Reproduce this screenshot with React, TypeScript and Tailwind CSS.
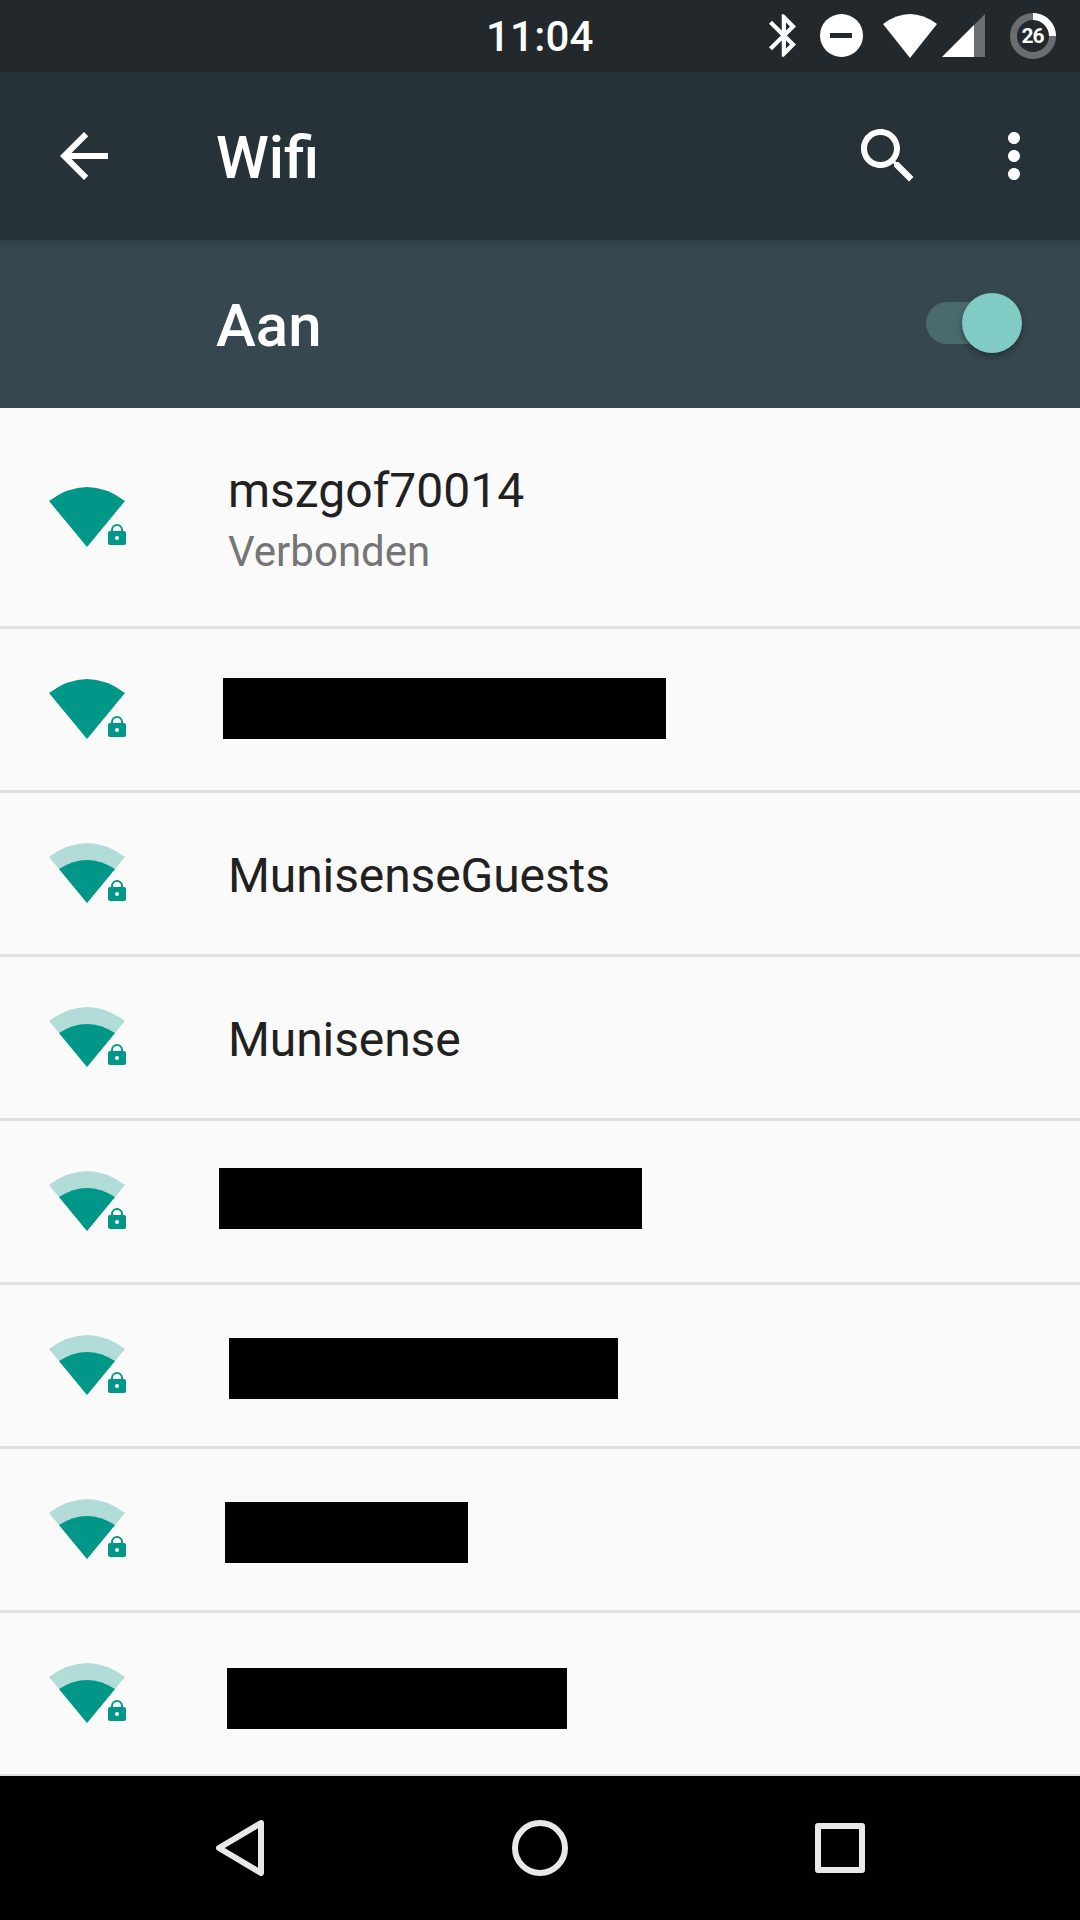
import React from "react";

const rowFont = { fontFamily: "Roboto, sans-serif" };

const WifiIcon = ({ full }: { full?: boolean }) => {
  return (
    <svg width="84" height="66" viewBox="0 0 84 66" className="shrink-0 mt-[5px]">
      {full ? (
        <path d="M0 14 Q38 -14 76 14 L38 60 Z" fill="#009688" />
      ) : (
        <>
          <path d="M0 14 Q38 -14 76 14 L38 60 Z" fill="#b2dcd7" />
          <path d="M10 26 Q38 8 66 26 L38 60 Z" fill="#009688" />
        </>
      )}
      {/* lock */}
      <path d="M63 44v-1a5 5 0 0 1 10 0v1" fill="none" stroke="#009688" strokeWidth="2" />
      <path d="M61 58a2 2 0 0 1-2-2V46a2 2 0 0 1 2-2h14a2 2 0 0 1 2 2v10a2 2 0 0 1-2 2Z" fill="#009688" />
      <circle cx="68" cy="51" r="2" fill="#fafafa" />
    </svg>
  );
};

const Row = ({ children }: { children: React.ReactNode }) => (
  <div className="flex items-center h-[164px] shrink-0 border-b-[3px] border-[#e0e0e0] pl-[49px]">
    {children}
  </div>
);

export default function App() {
  return (
    <div className="w-[1080px] h-[1920px] flex flex-col overflow-hidden bg-[#fafafa]" style={rowFont}>
      {/* status bar */}
      <div className="relative flex items-center h-[72px] shrink-0 bg-[#22282c] text-white">
        <span className="ml-[486px] mt-[2px] text-[42px] leading-[72px] font-medium tracking-[0.2px]">11:04</span>
        <svg width="27" height="43" viewBox="5 2 12.710 20" fill="#fff" className="ml-[175px] shrink-0 -mt-[1px]">
          <path d="M17.710 7.710L12 2h-1v7.590L6.410 5 5 6.410 10.590 12 5 17.590 6.410 19 11 14.410V22h1l5.710-5.710-4.300-4.290 4.300-4.290zM13 5.830l1.880 1.880L13 9.590V5.830zm1.880 10.460L13 18.170v-3.760l1.880 1.880z" />
        </svg>
        <div className="ml-[24px] w-[43px] h-[43px] rounded-full bg-white flex items-center justify-center shrink-0 -mt-[1px]">
          <div className="w-[22px] h-[5px] bg-[#22282c]" />
        </div>
        <svg width="54" height="44" viewBox="0 0 54 44" className="ml-[20px] shrink-0 -mt-[1px]">
          <path d="M0 10 Q27 -10 54 10 L27 44 Z" fill="#fff" />
        </svg>
        <svg width="43" height="43" viewBox="0 0 43 43" className="ml-[5px] shrink-0 -mt-[1px]">
          <path d="M0 43 L43 0 V43 Z" fill="#6a6e71" />
          <path d="M0 43 L32 11 V43 Z" fill="#fff" />
        </svg>
        <div className="relative ml-[25px] w-[46px] h-[46px] shrink-0">
          <svg width="46" height="46" viewBox="0 0 46 46">
            <circle cx="23" cy="23" r="19.500" fill="none" stroke="#6a6e71" strokeWidth="7" />
            <path d="M23 3.500 A19.500 19.500 0 0 1 42.500 23" fill="none" stroke="#fff" strokeWidth="7" />
          </svg>
          <span className="absolute inset-0 flex items-center justify-center text-[21px] font-bold leading-none tracking-[-1px] text-white">
            26
          </span>
        </div>
      </div>

      {/* app bar */}
      <div className="relative z-10 flex items-center h-[168px] shrink-0 bg-[#263238] text-white shadow-[0_3px_10px_rgba(0,0,0,0.12)]">
        <svg width="72" height="72" viewBox="0 0 24 24" fill="#fff" className="ml-[48px] shrink-0">
          <path d="M20 11H7.830l5.590-5.590L12 4l-8 8 8 8 1.410-1.410L7.830 13H20v-2z" />
        </svg>
        <span className="ml-[96px] mt-[3px] text-[60px] font-medium leading-none">Wifi</span>
        <svg width="72" height="72" viewBox="0 0 24 24" fill="#fff" className="ml-auto shrink-0">
          <path d="M15.500 14h-.79l-.28-.27C15.410 12.590 16 11.110 16 9.500 16 5.910 13.090 3 9.500 3S3 5.910 3 9.500 5.910 16 9.500 16c1.610 0 3.090-.59 4.230-1.570l.27.28v.79l5 4.990L20.490 19l-4.990-5zm-6 0C7.010 14 5 11.990 5 9.500S7.010 5 9.500 5 14 7.010 14 9.500 11.990 14 9.500 14z" />
        </svg>
        <svg width="72" height="72" viewBox="0 0 24 24" fill="#fff" className="ml-[54px] mr-[30px] shrink-0">
          <path d="M12 8c1.100 0 2-.9 2-2s-.9-2-2-2-2 .9-2 2 .9 2 2 2zm0 2c-1.100 0-2 .9-2 2s.9 2 2 2 2-.9 2-2-.9-2-2-2zm0 6c-1.100 0-2 .9-2 2s.9 2 2 2 2-.9 2-2-.9-2-2-2z" />
        </svg>
      </div>

      {/* on/off bar */}
      <div className="flex items-center h-[168px] shrink-0 bg-[#37474f] text-white">
        <span className="ml-[216px] mt-[3px] text-[60px] font-medium leading-none">Aan</span>
        <div className="relative ml-auto mr-[64px] w-[90px] h-[42px] rounded-full bg-[#4b6a6c] -mt-[2px]">
          <div className="absolute left-[36px] -top-[9px] w-[60px] h-[60px] rounded-full bg-[#80cbc4] shadow-[0_3px_6px_rgba(0,0,0,0.35)]" />
        </div>
      </div>

      {/* network list */}
      <div className="flex-1 flex flex-col overflow-hidden">
        <div className="flex items-center h-[221px] shrink-0 border-b-[3px] border-[#e0e0e0] pl-[49px]">
          <WifiIcon full />
          <div className="ml-[95px] mt-[8px] flex flex-col">
            <span className="text-[48px] leading-[60px] text-[#212121]">mszgof70014</span>
            <span className="text-[42px] leading-[61px] text-[#757575]">Verbonden</span>
          </div>
        </div>
        <Row>
          <WifiIcon full />
          <div className="ml-[90px] w-[443px] h-[61px] bg-black -mt-[2px]" />
        </Row>
        <Row>
          <WifiIcon />
          <span className="ml-[95px] mt-[5px] text-[48px] leading-[60px] tracking-[-0.1px] text-[#212121]">MunisenseGuests</span>
        </Row>
        <Row>
          <WifiIcon />
          <span className="ml-[95px] mt-[5px] text-[48px] leading-[60px] tracking-[-0.1px] text-[#212121]">Munisense</span>
        </Row>
        <Row>
          <WifiIcon />
          <div className="ml-[86px] w-[423px] h-[61px] bg-black -mt-[6px]" />
        </Row>
        <Row>
          <WifiIcon />
          <div className="ml-[96px] w-[389px] h-[61px] bg-black mt-[6px]" />
        </Row>
        <Row>
          <WifiIcon />
          <div className="ml-[92px] w-[243px] h-[61px] bg-black mt-[6px]" />
        </Row>
        <Row>
          <WifiIcon />
          <div className="ml-[94px] w-[340px] h-[61px] bg-black mt-[10px]" />
        </Row>
      </div>

      {/* nav bar */}
      <div className="flex items-center h-[144px] shrink-0 bg-black">
        <svg width="48" height="56" viewBox="0 0 48 56" className="ml-[216px] shrink-0">
          <path d="M45 3 L3 28 L45 53 Z" fill="none" stroke="#e8e8e8" strokeWidth="6" strokeLinejoin="round" />
        </svg>
        <div className="ml-[248px] w-[56px] h-[56px] rounded-full border-[6px] border-[#e8e8e8] shrink-0" />
        <div className="ml-[247px] w-[50px] h-[50px] rounded-[3px] border-[6px] border-[#e8e8e8] shrink-0" />
      </div>
    </div>
  );
}
